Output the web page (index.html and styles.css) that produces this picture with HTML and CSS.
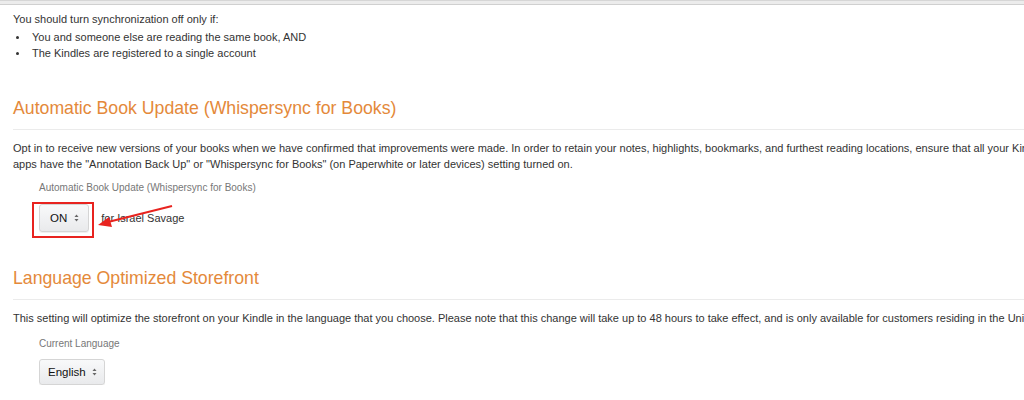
FILE: index.html
```html
<!DOCTYPE html>
<html lang="en">
<head>
    <meta charset="UTF-8">
    <title>Manage Your Devices - Settings</title>
    <link rel="stylesheet" href="styles.css">
</head>
<body>
    <div class="topbar"></div>
    <div class="page">
        <div class="sync-note">
            <p>You should turn synchronization off only if:</p>
            <ul>
                <li>You and someone else are reading the same book, AND</li>
                <li>The Kindles are registered to a single account</li>
            </ul>
        </div>

        <section class="setting">
            <h2>Automatic Book Update (Whispersync for Books)</h2>
            <p class="desc">Opt in to receive new versions of your books when we have confirmed that improvements were made. In order to retain your notes, highlights, bookmarks, and furthest reading locations, ensure that all your Kindle<br>apps have the "Annotation Back Up" or "Whispersync for Books" (on Paperwhite or later devices) setting turned on.</p>
            <div class="field">
                <label class="field-label">Automatic Book Update (Whispersync for Books)</label>
                <div class="field-row">
                    <span class="highlight">
                        <span class="select">ON
                            <svg class="caret" width="5" height="8" viewBox="0 0 5 8"><polygon points="0.5,3 2.5,0.5 4.5,3" fill="#666"/><polygon points="0.5,5 2.5,7.5 4.5,5" fill="#666"/></svg>
                        </span>
                    </span>
                    <span class="owner">for Israel Savage</span>
                    <svg class="arrow" width="90" height="30" viewBox="0 0 90 30">
                        <line x1="76" y1="2" x2="12" y2="18" stroke="#e8231f" stroke-width="2"/>
                        <polygon points="2,21 13,13 16,23" fill="#e8231f"/>
                    </svg>
                </div>
            </div>
        </section>

        <section class="setting language">
            <h2>Language Optimized Storefront</h2>
            <p class="desc">This setting will optimize the storefront on your Kindle in the language that you choose. Please note that this change will take up to 48 hours to take effect, and is only available for customers residing in the United States.</p>
            <div class="field">
                <label class="field-label">Current Language</label>
                <div class="field-row">
                    <span class="select small">English
                        <svg class="caret" width="5" height="8" viewBox="0 0 5 8"><polygon points="0.5,3 2.5,0.5 4.5,3" fill="#666"/><polygon points="0.5,5 2.5,7.5 4.5,5" fill="#666"/></svg>
                    </span>
                </div>
            </div>
        </section>
    </div>
</body>
</html>
```

FILE: styles.css
```css
* {
    box-sizing: border-box;
    margin: 0;
    padding: 0;
}
body {
    font-family: "Liberation Sans", Arial, sans-serif;
    font-size: 11px;
    line-height: 16px;
    color: #333;
    background-color: #fff;
    overflow: hidden;
}
.topbar {
    height: 5px;
    background-color: #ececec;
    border-top: 1px solid #d6d6d6;
    border-bottom: 1px solid #d0d0d0;
}
.page {
    width: 1200px;
    padding: 6px 0 0 13px;
}
.sync-note ul {
    list-style: none;
    margin-top: 2px;
}
.sync-note li {
    position: relative;
    padding-left: 19px;
}
.sync-note li::before {
    content: "";
    position: absolute;
    left: 3px;
    top: 7px;
    width: 3px;
    height: 3px;
    border-radius: 50%;
    background-color: #333;
}
.setting h2 {
    font-size: 17.7px;
    font-weight: normal;
    line-height: 22px;
    color: #e4893a;
    margin-top: 36px;
    padding-bottom: 10px;
    border-bottom: 1px solid #ebebeb;
}
.language h2 {
    margin-top: 29px;
}
.desc {
    margin-top: 10px;
    white-space: nowrap;
}
.field {
    padding-left: 26px;
    margin-top: 8px;
}
.language .field {
    margin-top: 10px;
}
.field-label {
    display: block;
    font-size: 10px;
    color: #777;
}
.field-row {
    display: flex;
    align-items: center;
    margin-top: 6px;
    position: relative;
}
.language .field-row {
    margin-top: 7px;
}
.highlight {
    border: 2px solid #e8231f;
    padding: 0 3px 4px 5px;
    margin-left: -7px;
}
.select {
    display: inline-flex;
    align-items: center;
    height: 28px;
    padding: 0 9px 0 10px;
    border: 1px solid #d5d5d5;
    border-radius: 3px;
    background: linear-gradient(#f8f9fa, #e9eaec);
    box-shadow: 0 1px 0 rgba(0, 0, 0, 0.06);
    color: #111;
    font-size: 11.5px;
}
.select.small {
    height: 26px;
    padding: 0 7px 0 8px;
}
.caret {
    margin-left: 7px;
}
.small .caret {
    margin-left: 6px;
}
.owner {
    margin-left: 7px;
    padding-bottom: 4px;
}
.arrow {
    position: absolute;
    left: 57px;
    top: 2px;
}
```
